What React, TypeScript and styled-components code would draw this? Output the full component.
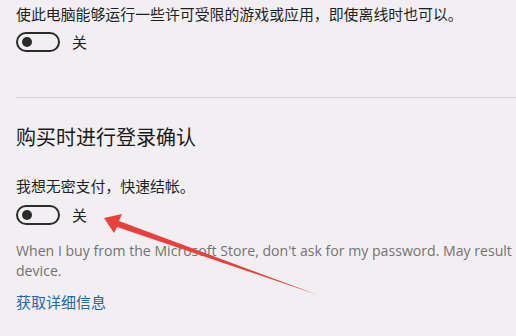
import React from "react";
import styled, { createGlobalStyle } from "styled-components";

const Global = createGlobalStyle`
  html, body {
    margin: 0;
    padding: 0;
    background: #f2eff3;
    overflow: hidden;
  }
  body {
    font-family: "Noto Sans CJK SC", "Noto Sans", sans-serif;
    color: #1c1c1c;
  }
`;

const Page = styled.div`
  position: relative;
  width: 516px;
  height: 336px;
  overflow: hidden;
  display: flex;
  flex-direction: column;
`;

const Section = styled.section<{ $top: number }>`
  display: flex;
  flex-direction: column;
  padding: ${(p) => p.$top}px 0 0 16px;
`;

const Desc = styled.div<{ $mt?: number }>`
  margin-top: ${(p) => p.$mt ?? 0}px;
  font-size: 14.9px;
  line-height: 20px;
  white-space: nowrap;
  color: #1f1f1f;
`;

const Heading = styled.h2`
  margin: 0;
  font-weight: 400;
  font-size: 20px;
  line-height: 28px;
  color: #1a1a1a;
`;

const ToggleRow = styled.div<{ $mt: number }>`
  display: flex;
  align-items: center;
  gap: 12px;
  margin-top: ${(p) => p.$mt}px;
  height: 20px;
`;

const Switch = styled.span`
  box-sizing: border-box;
  width: 44px;
  height: 20px;
  border: 2px solid #2b2b2b;
  border-radius: 10px;
  display: flex;
  align-items: center;
  padding-left: 4px;
`;

const Knob = styled.span`
  width: 10px;
  height: 10px;
  border-radius: 50%;
  background: #2b2b2b;
`;

const ToggleLabel = styled.span`
  font-size: 15px;
  line-height: 20px;
  color: #1f1f1f;
`;

const Divider = styled.hr`
  margin: 45px 0 0 16px;
  border: none;
  border-top: 1px solid #d4d0d6;
  height: 0;
`;

const Note = styled.p`
  margin: 16px 0 0 0;
  font-family: "Open Sans", "Noto Sans", sans-serif;
  font-size: 14.1px;
  line-height: 20px;
  color: #727272;
  white-space: nowrap;
`;

const Link = styled.a`
  margin-top: 11px;
  font-size: 15px;
  line-height: 20px;
  color: #1f68a4;
  text-decoration: none;
  cursor: pointer;
`;

const Arrow = styled.svg`
  position: absolute;
  left: 0;
  top: 0;
  pointer-events: none;
`;

const Toggle: React.FC<{ mt: number }> = ({ mt }) => (
  <ToggleRow $mt={mt}>
    <Switch>
      <Knob />
    </Switch>
    <ToggleLabel>关</ToggleLabel>
  </ToggleRow>
);

export default function App() {
  return (
    <Page>
      <Global />
      <Section $top={4}>
        <Desc>使此电脑能够运行一些许可受限的游戏或应用，即使离线时也可以。</Desc>
        <Toggle mt={8} />
      </Section>
      <Divider />
      <Section $top={25}>
        <Heading>购买时进行登录确认</Heading>
        <Desc $mt={25}>我想无密支付，快速结帐。</Desc>
        <Toggle mt={9} />
        <Note>
          When I buy from the Microsoft Store, don't ask for my password. May result in purchases on this
          <br />
          device.
        </Note>
        <Link>获取详细信息</Link>
      </Section>
      <Arrow width="516" height="336" viewBox="0 0 516 336">
        <path
          d="M104 218 L122 214 L119 221 L318 295 L117 227 L114 233 Z"
          fill="#e8403a"
        />
      </Arrow>
    </Page>
  );
}
